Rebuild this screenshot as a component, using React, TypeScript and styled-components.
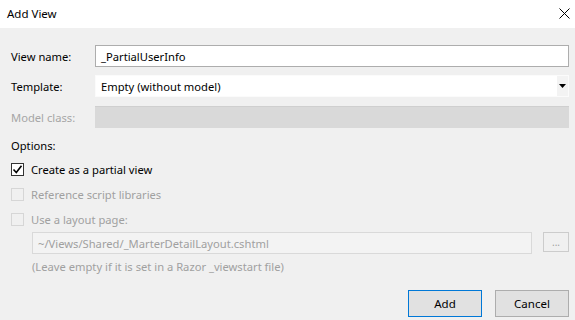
import React from "react";
import styled, { createGlobalStyle } from "styled-components";

const Global = createGlobalStyle`
  html, body { margin: 0; padding: 0; background: #f0f0f0; }
  body { font-family: "Noto Sans", "Liberation Sans", sans-serif; font-size: 11.2px; color: #000; }
`;

const Window = styled.div`
  width: 575px;
  height: 320px;
  background: #f0f0f0;
  display: flex;
  flex-direction: column;
  overflow: hidden;
`;

const TitleBar = styled.div`
  height: 28px;
  background: #ffffff;
  display: flex;
  align-items: center;
  justify-content: space-between;
  padding: 0 3px 2px 7px;
  box-sizing: border-box;
  font-size: 11.5px;
`;

const CloseButton = styled.div`
  width: 14px;
  height: 14px;
  display: flex;
  align-items: center;
  justify-content: center;
  margin-right: 1px;
`;

const Body = styled.div`
  padding: 17px 6px 0 11px;
  display: flex;
  flex-direction: column;
`;

const FieldRow = styled.div<{ $mt?: number }>`
  display: grid;
  grid-template-columns: 84px 1fr;
  align-items: center;
  height: 22px;
  margin-top: ${(p) => p.$mt ?? 0}px;
`;

const Label = styled.span<{ $disabled?: boolean }>`
  color: ${(p) => (p.$disabled ? "#a6a6a6" : "#000")};
  white-space: nowrap;
`;

const TextBox = styled.div`
  height: 22px;
  box-sizing: border-box;
  border: 1px solid #adadad;
  background: #fff;
  padding: 0 5px;
  display: flex;
  align-items: center;
`;

const Select = styled.div`
  height: 22px;
  box-sizing: border-box;
  background: #fff;
  display: flex;
  align-items: center;
  padding-left: 5px;
  border: 1px solid #fbfbfb;
`;

const SelectText = styled.span`
  flex: 1;
`;

const SelectArrow = styled.div`
  width: 11px;
  height: 20px;
  background: #f3f3f3;
  display: flex;
  align-items: center;
  justify-content: center;
`;

const DisabledBox = styled.div`
  height: 22px;
  box-sizing: border-box;
  background: #d9d9d9;
  border-top: 1px solid #cfcfcf;
`;

const SectionLabel = styled.div`
  margin-top: 7px;
  height: 20px;
  display: flex;
  align-items: center;
`;

const CheckRow = styled.label<{ $disabled?: boolean; $mt?: number }>`
  display: flex;
  align-items: center;
  height: 20px;
  margin-top: ${(p) => p.$mt ?? 0}px;
  color: ${(p) => (p.$disabled ? "#a0a0a0" : "#000")};
  gap: 7px;
`;

const Box = styled.span<{ $disabled?: boolean }>`
  width: 13px;
  height: 13px;
  box-sizing: border-box;
  border: 1px solid ${(p) => (p.$disabled ? "#d6d6d6" : "#333")};
  background: ${(p) => (p.$disabled ? "#f0f0f0" : "#fff")};
  display: flex;
  align-items: center;
  justify-content: center;
`;

const Indented = styled.div`
  padding-left: 21px;
  display: flex;
  flex-direction: column;
`;

const PathRow = styled.div`
  display: flex;
  align-items: center;
  gap: 11px;
  margin-top: 3px;
`;

const PathBox = styled.div`
  flex: 1;
  height: 22px;
  box-sizing: border-box;
  border: 1px solid #d9d9d9;
  background: #f3f3f3;
  color: #a0a0a0;
  padding: 0 5px;
  display: flex;
  align-items: center;
`;

const BrowseButton = styled.div`
  width: 26px;
  height: 20px;
  box-sizing: border-box;
  border: 1px solid #cccccc;
  background: #f0f0f0;
  color: #a0a0a0;
  display: flex;
  align-items: center;
  justify-content: center;
  font-size: 10px;
  align-self: flex-start;
`;

const Hint = styled.div`
  color: #a0a0a0;
  height: 20px;
  display: flex;
  align-items: center;
  margin-top: 2px;
`;

const ButtonBar = styled.div`
  display: flex;
  justify-content: flex-end;
  gap: 13px;
  margin-top: 14px;
`;

const Button = styled.div<{ $primary?: boolean }>`
  width: 74px;
  height: 27px;
  box-sizing: border-box;
  border: 1px solid ${(p) => (p.$primary ? "#0078d7" : "#adadad")};
  background: #e1e1e1;
  display: flex;
  align-items: center;
  justify-content: center;
  font-size: 11.5px;
`;

const Check = () => (
  <svg width="11" height="11" viewBox="0 0 11 11">
    <path d="M1.5 5.5 L4.3 8.5 L9.5 1.8" fill="none" stroke="#000" strokeWidth="1.6" />
  </svg>
);

export default function App() {
  return (
    <Window>
      <Global />
      <TitleBar>
        <span>Add View</span>
        <CloseButton>
          <svg width="11" height="11" viewBox="0 0 11 11">
            <path d="M0.5 0.5 L10.5 10.5 M10.5 0.5 L0.5 10.5" stroke="#000" strokeWidth="1" />
          </svg>
        </CloseButton>
      </TitleBar>
      <Body>
        <FieldRow>
          <Label>View name:</Label>
          <TextBox>_PartialUserInfo</TextBox>
        </FieldRow>
        <FieldRow $mt={8}>
          <Label>Template:</Label>
          <Select>
            <SelectText>Empty (without model)</SelectText>
            <SelectArrow>
              <svg width="7" height="4" viewBox="0 0 7 4">
                <path d="M0 0 L7 0 L3.5 4 Z" fill="#000" />
              </svg>
            </SelectArrow>
          </Select>
        </FieldRow>
        <FieldRow $mt={9}>
          <Label $disabled>Model class:</Label>
          <DisabledBox />
        </FieldRow>
        <SectionLabel>Options:</SectionLabel>
        <CheckRow $mt={4}>
          <Box>
            <Check />
          </Box>
          Create as a partial view
        </CheckRow>
        <CheckRow $disabled $mt={5}>
          <Box $disabled />
          Reference script libraries
        </CheckRow>
        <CheckRow $disabled $mt={5}>
          <Box $disabled />
          Use a layout page:
        </CheckRow>
        <Indented>
          <PathRow>
            <PathBox>~/Views/Shared/_MarterDetailLayout.cshtml</PathBox>
            <BrowseButton>...</BrowseButton>
          </PathRow>
          <Hint>(Leave empty if it is set in a Razor _viewstart file)</Hint>
        </Indented>
        <ButtonBar>
          <Button $primary>Add</Button>
          <Button>Cancel</Button>
        </ButtonBar>
      </Body>
    </Window>
  );
}
